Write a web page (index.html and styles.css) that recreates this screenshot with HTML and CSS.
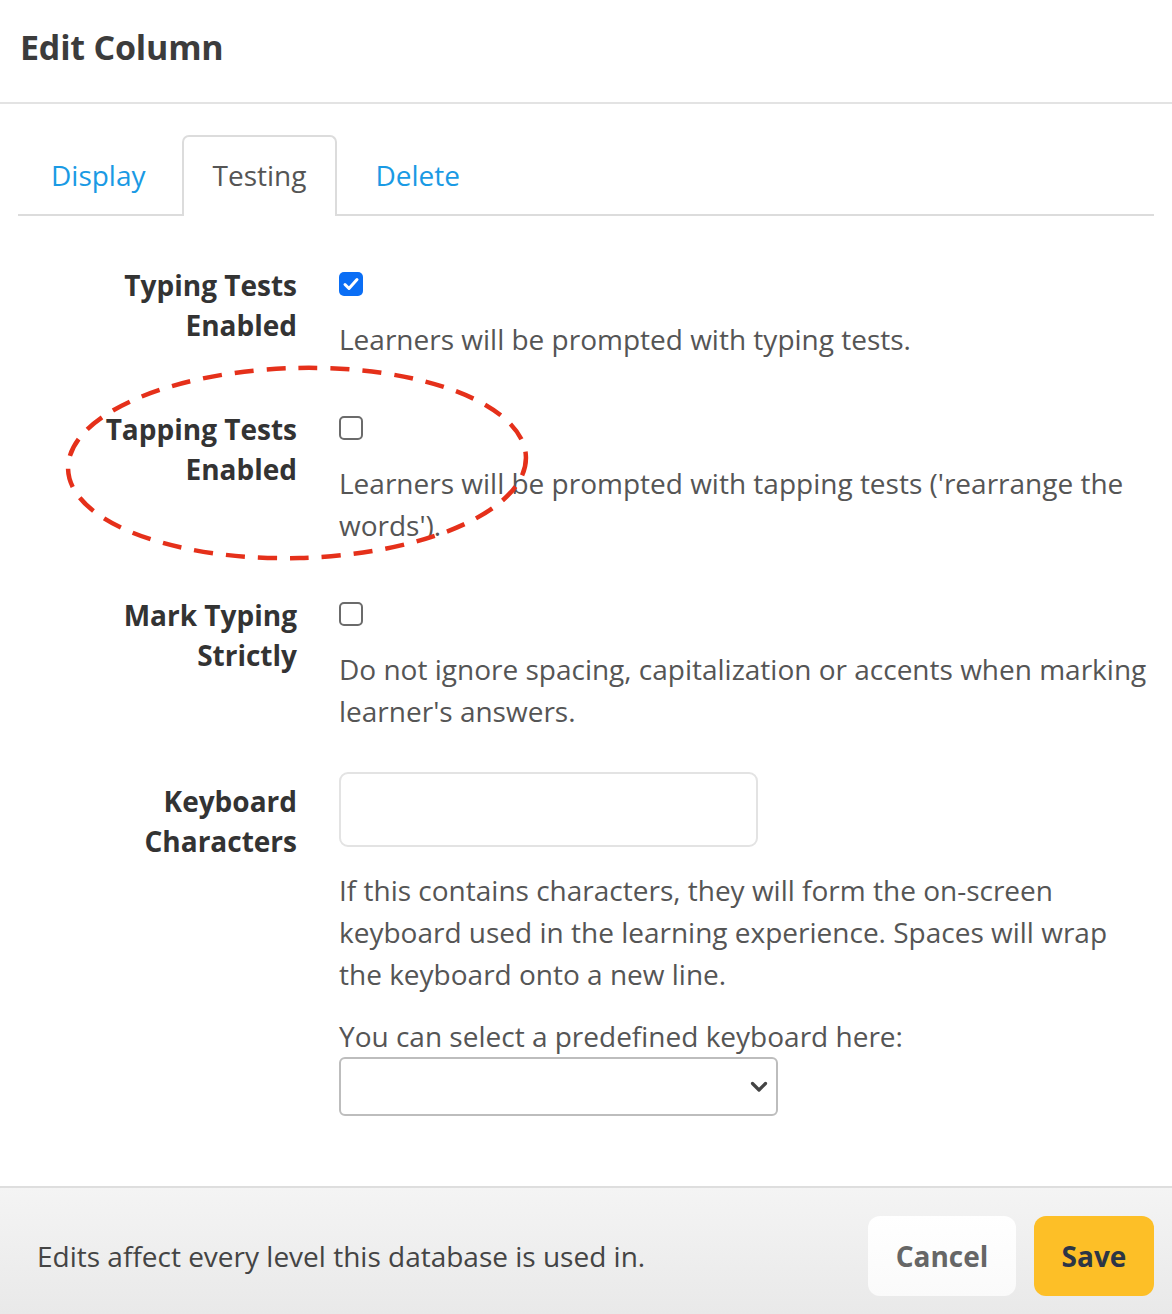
FILE: index.html
```html
<!DOCTYPE html>
<html>
<head>
<meta charset="utf-8">
<link rel="stylesheet" href="styles.css">
</head>
<body>
<div class="modal">
  <header class="head"><h1 class="title">Edit Column</h1></header>
  <nav class="tabs">
    <a class="tab">Display</a>
    <a class="tab active">Testing</a>
    <a class="tab">Delete</a>
  </nav>
  <div class="form">
    <div class="row">
      <div class="label">Typing Tests<br>Enabled</div>
      <div class="field">
        <span class="check checked"><svg viewBox="0 0 24 24" width="24" height="24"><path d="M6 12.5l4 4 8-9" fill="none" stroke="#fff" stroke-width="3" stroke-linecap="round" stroke-linejoin="round"/></svg></span>
        <p class="desc">Learners will be prompted with typing tests.</p>
      </div>
    </div>
    <div class="row">
      <div class="label">Tapping Tests<br>Enabled</div>
      <div class="field">
        <span class="check"></span>
        <p class="desc">Learners will be prompted with tapping tests ('rearrange the words').</p>
      </div>
    </div>
    <div class="row">
      <div class="label">Mark Typing<br>Strictly</div>
      <div class="field">
        <span class="check"></span>
        <p class="desc">Do not ignore spacing, capitalization or accents when marking learner's answers.</p>
      </div>
    </div>
    <div class="row">
      <div class="label">Keyboard<br>Characters</div>
      <div class="field">
        <div class="textbox"></div>
        <p class="desc">If this contains characters, they will form the on-screen keyboard used in the learning experience. Spaces will wrap the keyboard onto a new line.</p>
        <p class="desc pre">You can select a predefined keyboard here:</p>
        <div class="select"><svg class="chev" viewBox="0 0 18 12" width="18" height="12"><path d="M2.5 2.5l6.5 6.5 6.5-6.5" fill="none" stroke="#444" stroke-width="3.2" stroke-linecap="round" stroke-linejoin="round"/></svg></div>
      </div>
    </div>
    <svg class="annot" width="520" height="240" viewBox="0 0 520 240"><ellipse cx="249" cy="113" rx="229" ry="95" transform="rotate(-1.5 249 113)" fill="none" stroke="#e5301a" stroke-width="4.5" stroke-dasharray="19 13"/></svg>
  </div>
  <footer class="foot">
    <p class="note">Edits affect every level this database is used in.</p>
    <div class="buttons">
      <button class="btn cancel">Cancel</button>
      <button class="btn save">Save</button>
    </div>
  </footer>
</div>
</body>
</html>
```
FILE: styles.css
```css
* { box-sizing: border-box; }
html, body { margin: 0; padding: 0; background: #fff; }
body { font-family: "Open Sans", "Liberation Sans", sans-serif; color: #555; }
.modal { width: 1172px; min-height: 1314px; display: flex; flex-direction: column; }
.head { height: 104px; border-bottom: 2px solid #e3e3e3; padding: 0 20px; display: flex; align-items: center; }
.title { margin: 0; font-size: 34px; font-weight: 700; color: #3c3c3c; line-height: 1; position: relative; top: -4px; letter-spacing: -0.2px; }
.tabs { display: flex; margin: 31px 18px 0; border-bottom: 2px solid #dcdcdc; height: 81px; }
.tab { display: flex; align-items: center; padding: 0 29px 4px; font-size: 28px; color: #1a9ae4; border: 2px solid transparent; border-bottom: none; border-radius: 7px 7px 0 0; margin-right: 2px; height: 81px; }
.tab.active { color: #555; border-color: #dcdcdc; background: #fff; margin-bottom: -2px; }
.tab:first-child { padding-left: 31px; margin-right: 5px; }
.tab:last-child { padding-left: 34px; }
.form { position: relative; padding: 40px 18px 70px; flex: 1; }
.row { display: grid; grid-template-columns: 279px 1fr; column-gap: 42px; margin-bottom: 40px; }
.row:last-of-type { margin-bottom: 0; }
.label { text-align: right; font-weight: 700; font-size: 28px; line-height: 40px; color: #333; padding-top: 9px; }
.field { display: flex; flex-direction: column; align-items: flex-start; }
.check { display: block; width: 24px; height: 24px; border: 2px solid #6b6b6b; border-radius: 5px; margin-top: 16px; background: #fff; }
.check.checked { border: none; background: #0a6ef5; }
.check svg { display: block; }
.desc { margin: 22px 0 0; font-size: 28px; line-height: 42px; color: #555; }
.desc.pre { margin-top: 20px; }
.textbox { width: 419px; height: 75px; border: 2px solid #e3e3e3; border-radius: 9px; }
.select { width: 439px; height: 59px; border: 2px solid #bdbdbd; border-radius: 6px; display: flex; align-items: center; justify-content: flex-end; padding-right: 8px; }
.chev { display: block; }
.annot { position: absolute; left: 48px; top: 134px; pointer-events: none; }
.foot { border-top: 2px solid #dedede; background: linear-gradient(#f4f4f4, #e9e9e9); display: flex; align-items: center; justify-content: space-between; padding: 28px 18px 18px 37px; }
.note { margin: 0; font-size: 28px; color: #444; }
.buttons { display: flex; gap: 18px; }
.btn { font-family: "Open Sans", "Liberation Sans", sans-serif; font-size: 28px; font-weight: 700; height: 80px; border: none; border-radius: 12px; padding: 0; }
.cancel { width: 148px; background: linear-gradient(#fff, #fafafa); color: #666; }
.save { width: 120px; background: #fdbf27; color: #2c3546; }
```
